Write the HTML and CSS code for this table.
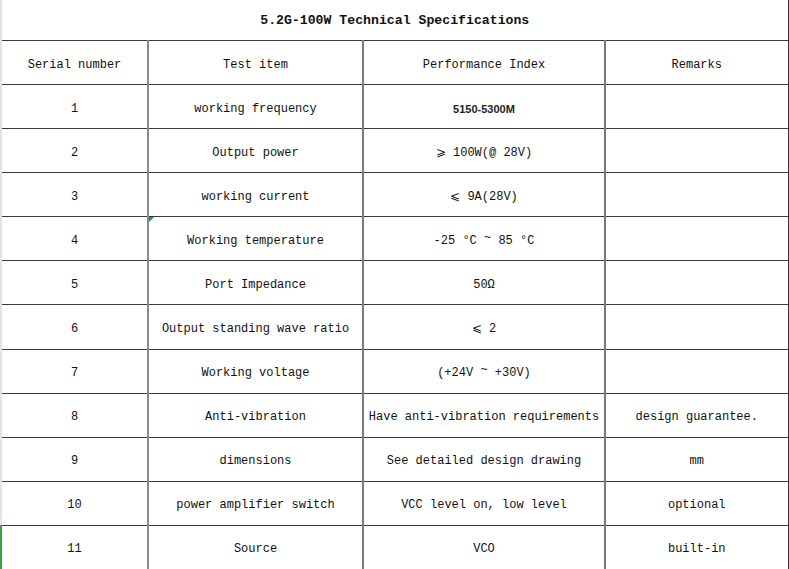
FILE: index.html
```html
<!DOCTYPE html>
<html>
<head>
<meta charset="utf-8">
<link rel="stylesheet" href="styles.css">
</head>
<body>
<div class="sheet">
  <div class="gutter"><div class="gutter-sel"></div></div>
  <table class="spec">
    <colgroup>
      <col class="c1"><col class="c2"><col class="c3"><col class="c4">
    </colgroup>
    <tr class="title-row"><td colspan="4" class="title">5.2G-100W Technical Specifications</td></tr>
    <tr><td class="gl">Serial number</td><td class="gr">Test item</td><td class="gr2">Performance Index</td><td>Remarks</td></tr>
    <tr><td class="gl">1</td><td class="gr">working frequency</td><td class="gr2 sans">5150-5300M</td><td></td></tr>
    <tr><td class="gl">2</td><td class="gr">Output power</td><td class="gr2">⩾ 100W(@ 28V)</td><td></td></tr>
    <tr><td class="gl">3</td><td class="gr">working current</td><td class="gr2">⩽ 9A(28V)</td><td></td></tr>
    <tr><td class="gl">4</td><td class="gr mark">Working temperature<span class="tri"></span></td><td class="gr2">-25 °C <span class="tl">~</span> 85 °C</td><td></td></tr>
    <tr><td class="gl">5</td><td class="gr">Port Impedance</td><td class="gr2">50Ω</td><td></td></tr>
    <tr><td class="gl">6</td><td class="gr">Output standing wave ratio</td><td class="gr2">⩽ 2</td><td></td></tr>
    <tr><td class="gl">7</td><td class="gr">Working voltage</td><td class="gr2">(+24V <span class="tl">~</span> +30V)</td><td></td></tr>
    <tr><td class="gl">8</td><td class="gr">Anti-vibration</td><td class="gr2">Have anti-vibration requirements</td><td>design guarantee.</td></tr>
    <tr><td class="gl">9</td><td class="gr">dimensions</td><td class="gr2">See detailed design drawing</td><td>mm</td></tr>
    <tr><td class="gl">10</td><td class="gr">power amplifier switch</td><td class="gr2">VCC level on, low level</td><td>optional</td></tr>
    <tr><td class="gl">11</td><td class="gr">Source</td><td class="gr2">VCO</td><td>built-in</td></tr>
  </table>
</div>
</body>
</html>
```

FILE: styles.css
```css
html, body {
  margin: 0;
  padding: 0;
  background: #ffffff;
}

.sheet {
  display: flex;
  width: 789px;
  height: 569px;
  overflow: hidden;
}

.gutter {
  width: 2px;
  flex: 0 0 2px;
  background: #e3e3e3;
  display: flex;
  flex-direction: column;
  justify-content: flex-end;
}

.gutter-sel {
  height: 44px;
  background: #3aa53a;
}

.spec {
  border-collapse: collapse;
  table-layout: fixed;
  width: 786px;
  font-family: "Liberation Mono", "DejaVu Sans Mono", monospace;
  font-size: 12px;
  color: #111;
  border-right: 1px solid #333;
}

.c1 { width: 146px; }
.c2 { width: 215px; }
.c3 { width: 242px; }
.c4 { width: 183px; }

.spec td {
  height: 39px;
  padding: 4px 0 0 0;
  text-align: center;
  vertical-align: middle;
  border-top: 1px solid #3a3a3a;
  border-right: 1px solid #333;
  white-space: nowrap;
}

.spec .title-row td {
  height: 39px;
  padding: 1px 0 0 0;
  border-top: none;
  border-bottom: 1px solid #3a3a3a;
}

.title {
  font-weight: bold;
  font-size: 13.2px;
}

.spec td.gr {
  border-right: 2px solid #7a7a7a;
}

.spec td.gl {
  border-right: 2px solid #8a8a8a;
}

.spec td.gr2 {
  border-right: 2px solid #777;
}

.sans {
  font-family: "Liberation Sans", Arial, sans-serif;
  font-weight: bold;
  font-size: 11px;
  color: #222;
}

.tl {
  position: relative;
  top: -3px;
}

.mark {
  position: relative;
}

.tri {
  position: absolute;
  left: 0;
  top: 0;
  width: 0;
  height: 0;
  border-top: 5px solid #1a9a1a;
  border-right: 5px solid transparent;
}
```
